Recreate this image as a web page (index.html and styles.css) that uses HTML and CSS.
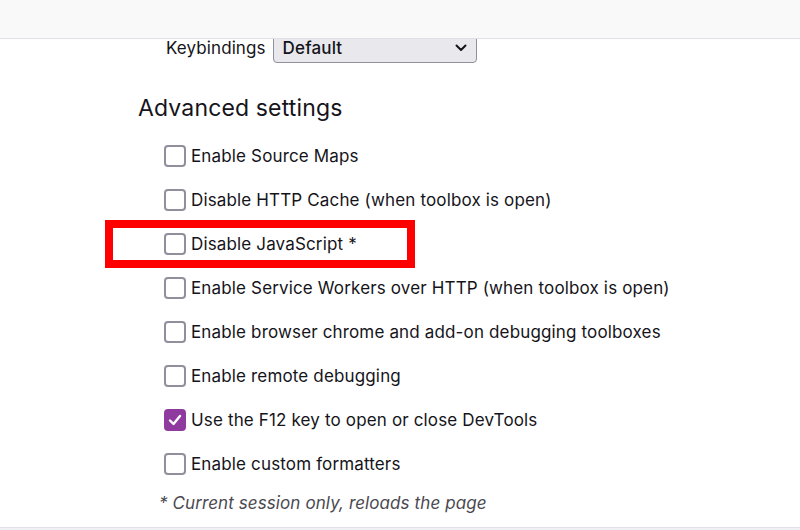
FILE: index.html
```html
<!DOCTYPE html>
<html>
<head>
<meta charset="utf-8">
<link rel="stylesheet" href="styles.css">
</head>
<body>
<div class="toolbar"></div>
<main class="viewport">
  <div class="content">
    <div class="keyrow">
      <span class="keylabel">Keybindings</span>
      <div class="select">
        <span>Default</span>
        <svg class="chev" width="12" height="8" viewBox="0 0 12 8"><path d="M1.5 1.5 L6 6 L10.5 1.5" fill="none" stroke="#15141a" stroke-width="2" stroke-linecap="round" stroke-linejoin="round"/></svg>
      </div>
    </div>
    <h2 class="heading">Advanced settings</h2>
    <ul class="options">
      <li class="opt"><span class="box"></span>Enable Source Maps</li>
      <li class="opt"><span class="box"></span>Disable HTTP Cache (when toolbox is open)</li>
      <li class="opt highlighted"><span class="box"></span>Disable JavaScript *</li>
      <li class="opt"><span class="box"></span>Enable Service Workers over HTTP (when toolbox is open)</li>
      <li class="opt"><span class="box"></span>Enable browser chrome and add-on debugging toolboxes</li>
      <li class="opt"><span class="box"></span>Enable remote debugging</li>
      <li class="opt"><span class="box checked"><svg width="14" height="12" viewBox="0 0 14 12"><path d="M2 6.5 L5.5 10 L12 2" fill="none" stroke="#fff" stroke-width="2.4" stroke-linecap="round" stroke-linejoin="round"/></svg></span>Use the F12 key to open or close DevTools</li>
      <li class="opt"><span class="box"></span>Enable custom formatters</li>
    </ul>
    <p class="note">* Current session only, reloads the page</p>
  </div>
</main>
<div class="bottombar"></div>
</body>
</html>
```
FILE: styles.css
```css
html, body {
  margin: 0;
  padding: 0;
}
body {
  width: 800px;
  height: 530px;
  overflow: hidden;
  display: flex;
  flex-direction: column;
  background: #fff;
  color: #15141a;
  font-family: Inter, "Noto Sans", sans-serif;
  font-size: 17px;
  letter-spacing: 0.15px;
}
.toolbar {
  height: 38px;
  flex: none;
  background: #f9f9fa;
  border-bottom: 1px solid #e0e0e6;
}
.viewport {
  flex: 1;
  overflow: hidden;
}
.content {
  margin-top: -7px;
  padding-left: 138px;
}
.keyrow {
  display: flex;
  align-items: center;
  gap: 7px;
  padding-left: 28px;
}
.keylabel {
  line-height: 20px;
  letter-spacing: 0.1px;
}
.select {
  display: flex;
  align-items: center;
  justify-content: space-between;
  box-sizing: border-box;
  height: 31px;
  width: 204px;
  padding: 0 9px 0 9px;
  border: 1px solid #8f8f9d;
  border-radius: 4px;
  background: #e9e9ed;
  font-weight: 500;
  line-height: 20px;
}
.chev {
  display: block;
}
.heading {
  margin: 31px 0 12px 0;
  font-size: 23px;
  font-weight: 400;
  line-height: 28px;
  letter-spacing: 0.15px;
}
.options {
  list-style: none;
  margin: 0;
  padding: 0 0 0 26px;
}
.opt {
  height: 44px;
  display: flex;
  align-items: center;
  gap: 5px;
  position: relative;
}
.highlighted::before {
  content: "";
  position: absolute;
  left: -59px;
  top: -2px;
  width: 310px;
  height: 48px;
  box-sizing: border-box;
  border: 8px solid #ff0000;
}
.box {
  width: 22px;
  height: 22px;
  box-sizing: border-box;
  border: 2px solid #8f8f9d;
  border-radius: 4px;
  display: flex;
  align-items: center;
  justify-content: center;
  flex: none;
}
.box.checked {
  background: #8f3a9f;
  border-color: #8f3a9f;
}
.note {
  margin: 6px 0 0 21px;
  font-style: italic;
  line-height: 22px;
  color: #4a4950;
  letter-spacing: 0.1px;
}
.bottombar {
  flex: none;
  height: 2px;
  background: #f0f0f4;
  border-top: 1px solid #e0e0e6;
}
```
